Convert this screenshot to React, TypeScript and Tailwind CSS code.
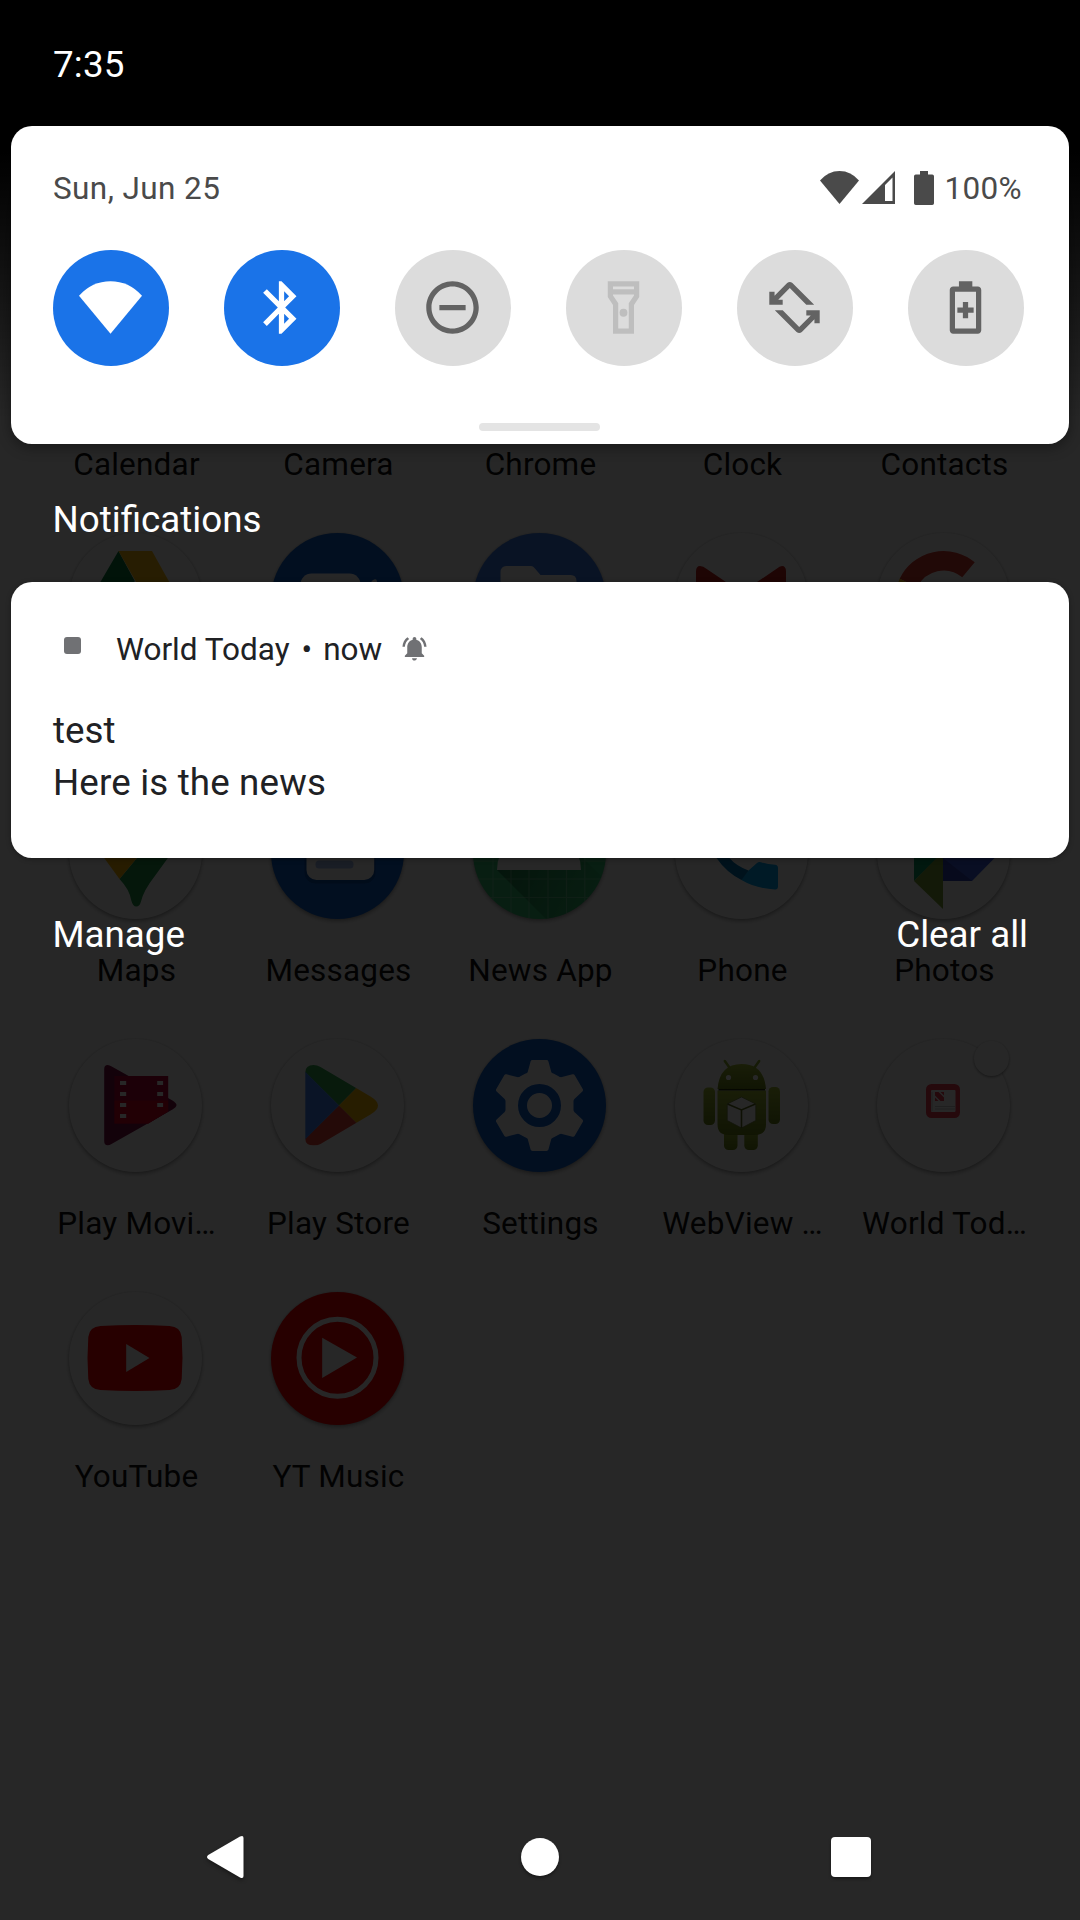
import type { ReactNode } from 'react';

/* Launcher icon art. Every icon uses a canvas centred on 0,0 with a radius of 66.5. */

function Disc({ color = 'bg-white', badge = false, children }: { color?: string; badge?: boolean; children?: ReactNode }) {
  return (
    <div className={`relative h-[133px] w-[133px] rounded-full shadow-[0_2px_4px_rgba(0,0,0,0.35),0_0_2px_rgba(0,0,0,0.12)] ${color}`}>
      <svg viewBox="-66.5 -66.5 133 133" className="h-full w-full overflow-hidden rounded-full">
        {children}
      </svg>
      {badge && <span className="absolute top-[2px] right-[1px] h-[35px] w-[35px] rounded-full bg-white shadow-[0_1px_3px_rgba(0,0,0,0.45)]" />}
    </div>
  );
}

const Drive = () => (
  <Disc>
    <path fill="#0b7a3c" d="M-17-48.500-50 8h32L-.7-18.500z" />
    <path fill="#fbbc04" opacity=".95" d="M-17-48.500h33.500L48 8H15z" />
  </Disc>
);

const Duo = () => (
  <Disc color="bg-[#0f62d2]">
    <rect x="-37" y="-26" width="60" height="52" rx="11" fill="#fff" />
    <path fill="#fff" d="M23-6 35-19q4-3 4.500 1v36q0 4-4 1L23 6z" />
  </Disc>
);

const Files = () => (
  <Disc color="bg-[#3f7de8]">
    <path fill="#fff" d="M-39 24v-51q0-6.500 6-6.500h24.500q2 0 3.500 2l6 7H31q6 0 6 6v42.500z" />
  </Disc>
);

const Gmail = () => (
  <Disc>
    <path fill="#c5221f" d="M-45.500 20v-48q0-5.500 4-5.500 3.500 0 6 2.500L0-7l35.500-24q2.500-2.500 5-2.500 4 0 4 5.500v48H30v-25L0 15l-30-20v25z" />
    <path fill="#8f1514" d="M-45.500 20v-38l15 10v28zM44.500 20v-38l-15 10v28z" />
  </Disc>
);

const Google = () => (
  <Disc>
    <g fill="none" strokeWidth="19.500">
      <path stroke="#d93a30" d="M-35-16.500A38.800 38.800 0 0 1 25-29.700" />
      <path stroke="#fbbc04" d="M-35 17a38.800 38.800 0 0 1 0-33.500" />
    </g>
  </Disc>
);

const Maps = () => (
  <Disc>
    <path fill="#23954a" d="M1.400 5.500V-8H38q-1 8-5.600 13.500L19 24Q8 38 5.500 49q-1.300 5-4.700 5-3.500 0-5-6Q-6 37-16 26.500z" />
    <path fill="#fbb604" d="M-31.300 5.500-38-8H12L1.400 5.500-16 26.500z" />
  </Disc>
);

const Messages = () => (
  <Disc color="bg-[#0f62d2]">
    <rect x="-33" y="-20" width="71" height="51" rx="11" fill="#0a4190" opacity=".6" />
    <rect x="-31" y="-24" width="67.700" height="51.500" rx="10" fill="#fff" />
    <rect x="-22" y="8" width="38" height="8" rx="3.500" fill="#a5bff0" />
  </Disc>
);

const NewsApp = () => (
  <Disc color="bg-[#35c474]">
    <defs>
      <linearGradient id="news-shade" x1="0" y1="0" x2="1" y2="0.300">
        <stop offset="0" stopColor="#1c7f49" />
        <stop offset="1" stopColor="#1c7f49" stopOpacity="0.100" />
      </linearGradient>
    </defs>
    <path fill="url(#news-shade)" d="M-42.500 17.500 8 68l60-20V30L38 0z" />
    <path
      stroke="#fff"
      strokeOpacity=".25"
      strokeWidth="1.200"
      d="M-46.500-66v132M-28.500-66v132M-10.500-66v132M8.500-66v132M27-66v132M45.300-66v132M-66 8.500H66M-66 26.500H66M-66 45H66"
    />
    <path fill="#fff" d="M-42.500 17.500a42 42 0 0 1 84 0z" />
  </Disc>
);

const Phone = () => (
  <Disc>
    <path fill="#0277b8" d="M-37-20Q-35-6-25 5.500-15 20 0 27.500q4-1 7-9.500Q-6 13-12 5.500L-20-20z" />
    <path fill="#03a9f4" d="M7 18 15.500 10.500q1.500-1.500 4-.8Q26 11.500 33.500 12.300q3 .2 3 3.200v18.500q0 3-3 2.900Q14 36 0 27.500z" />
  </Disc>
);

const Photos = () => (
  <Disc>
    <path fill="#0b9b66" d="M-29.500-30H0V0l-29.500 28.500z" />
    <path fill="#7ea336" d="M-.5-1v57.500l-29-28z" />
    <path fill="#3f5fe0" d="M-.5-1h58l-29 29.500H-.5z" />
    <path fill="#3340b4" d="M-.5 5.500 28.700 28.500H-.5z" />
  </Disc>
);

const PlayMovies = () => (
  <Disc>
    <path fill="#7d0f45" d="M-31.300-36.500q0-4 3.500-4 1.800 0 4 1.500L37-5q4 2.500 4 4.500T37 4L-24 38.500q-2 1.200-3.800 1.200-3.500 0-3.500-4z" />
    <path fill="#b80038" d="M-21-29.500h53.700V6L12.800 18H-21z" />
    <path fill="#dd0026" d="M-21-5h53.700V6L12.800 18H-21z" />
    <path fill="#fff" d="M-15.500-24.500h6.200v4h-6.200zM-15.500-13.500h6.200v4h-6.200zM-15.500-2.500h6.200v4h-6.200zM-15.500 8.500h6.200v4h-6.200zM21.700-24.500h5.900v4h-5.900zM21.700-13.500h5.900v4h-5.900zM21.700-2.500h5.900v4h-5.900z" />
  </Disc>
);

const PlayStore = () => (
  <Disc>
    <defs>
      <clipPath id="play-shape">
        <path d="M-32.200-33q0-7.500 8.200-7.500 3.500 0 7 2L33-9q7.500 4.500 7.500 9T33 9l-50 29.500q-3 1.500-7 1.500-8.200 0-8.200-7z" />
      </clipPath>
    </defs>
    <g clipPath="url(#play-shape)">
      <path fill="#34a853" d="M-40-41h60v22.200L1.500 0z" />
      <path fill="#fbbc04" d="M1.500 0 20-18.800 45-30v60L20 18.500z" />
      <path fill="#ea4335" d="M1.500 0 20 18.500V41h-60z" />
      <path fill="#4285f4" d="M-33-34.500 1.500 0-33 34.500z" />
    </g>
  </Disc>
);

const Settings = () => (
  <Disc color="bg-[#0f62d2]">
    <path
      fill="#fff"
      stroke="#fff"
      strokeWidth="4"
      strokeLinejoin="round"
      d="M-7-43.500H7L10-32.500q1 1.500 3 2.300l6 3.300q2 1 4 .4L33.500-29.200 41.500-15.500 33.500-8q-1.500 1.500-1.500 3.500v9q0 2 1.500 3.500l8 7.500-8 13.700L23 26.500q-2-.6-4 .4l-6 3.300q-2 .8-3 2.300L7 43.500H-7L-10 32.500q-1-1.500-3-2.300l-6-3.300q-2-1-4-.4L-33.500 29.200-41.500 15.500-33.500 8q1.500-1.500 1.500-3.500v-9q0-2-1.500-3.500l-8-7.500 8-13.700L-23-26.500q2 .6 4-.4l6-3.300q2-.8 3-2.300z"
    />
    <circle r="17" fill="#fff" stroke="#0f62d2" strokeWidth="9" />
  </Disc>
);

const WebView = () => (
  <Disc>
    <defs>
      <linearGradient id="droid" x1="0" y1="0" x2="0" y2="1">
        <stop offset="0" stopColor="#a4bf35" />
        <stop offset="1" stopColor="#6b8518" />
      </linearGradient>
    </defs>
    <g fill="url(#droid)">
      <rect x="-38" y="-18" width="11.500" height="37.500" rx="4.500" />
      <rect x="27" y="-18.500" width="11.500" height="37" rx="4.500" />
      <rect x="-17.500" y="20" width="13.500" height="24.500" rx="4.500" />
      <rect x="2.800" y="20" width="13.500" height="24.500" rx="4.500" />
      <path d="M-24-15h48.500v34q0 10.500-11 10.500h-26.500q-11 0-11-10.500z" />
      <path d="M-24-16.500q2-25 24.200-25t24.300 25z" />
    </g>
    <path stroke="#8fae30" strokeWidth="2.500" strokeLinecap="round" d="M-16.700-44.500l5 7M17.700-44.500l-5 7" />
    <path stroke="#26300a" strokeWidth="1.500" d="M-23-15.700h46.500" />
    <circle cx="-13" cy="-28" r="2.600" fill="#fff" />
    <circle cx="14" cy="-28" r="2.600" fill="#fff" />
    <path fill="#fff" stroke="#6f7f3a" strokeWidth=".8" d="M0-8.500 14.300-1.500V15L0 22.500-14.300 15V-1.500z" />
    <path fill="none" stroke="#5a6c1c" strokeWidth="1.600" d="M-14-1.500 0 4.500l14-6M0 4.500v18" />
  </Disc>
);

const WorldToday = () => (
  <Disc badge>
    <rect x="-17.500" y="-21.500" width="34" height="34" rx="5.500" fill="#ee3a50" />
    <rect x="-12.500" y="-15.500" width="24.500" height="22" rx="1" fill="#fff" />
    <path stroke="#ccc" strokeWidth="1" d="M-11.500-13.500v19M-8.500 1h20M-8.500 3.500h20" />
    <path fill="#ee3a50" d="M-8.500-13.500h3.500L.5-8v3.500h-3.500L-8.500-10zM-3-13.500H.5v3.500zM-8.500-8v3.500H-5z" />
  </Disc>
);

const YouTube = () => (
  <Disc>
    <path fill="#f00" d="M-35-32.500Q0-34.500 34-32.500q11 .5 12.200 11 1.600 21 0 42-1.200 10.500-12.200 11-34 2-69 0-11-.5-12.200-11-1.600-21 0-42 1.200-10.500 12.200-11z" />
    <path fill="#fff" d="M-9.300-14.500 14-.5-9.300 13.500z" />
  </Disc>
);

const YTMusic = () => (
  <Disc color="bg-[#f00]">
    <circle cy="-.7" r="38.500" fill="none" stroke="#fff" strokeWidth="5" />
    <path fill="#fff" d="M-15.300-20.800 19.500-1l-34.800 20.500z" />
  </Disc>
);

const apps: { label: string; icon: ReactNode }[] = [
  { label: 'Calendar', icon: <Disc /> },
  { label: 'Camera', icon: <Disc /> },
  { label: 'Chrome', icon: <Disc /> },
  { label: 'Clock', icon: <Disc /> },
  { label: 'Contacts', icon: <Disc /> },
  { label: '', icon: <Drive /> },
  { label: '', icon: <Duo /> },
  { label: '', icon: <Files /> },
  { label: '', icon: <Gmail /> },
  { label: '', icon: <Google /> },
  { label: 'Maps', icon: <Maps /> },
  { label: 'Messages', icon: <Messages /> },
  { label: 'News App', icon: <NewsApp /> },
  { label: 'Phone', icon: <Phone /> },
  { label: 'Photos', icon: <Photos /> },
  { label: 'Play Movi…', icon: <PlayMovies /> },
  { label: 'Play Store', icon: <PlayStore /> },
  { label: 'Settings', icon: <Settings /> },
  { label: 'WebView …', icon: <WebView /> },
  { label: 'World Tod…', icon: <WorldToday /> },
  { label: 'YouTube', icon: <YouTube /> },
  { label: 'YT Music', icon: <YTMusic /> },
];

function AppDrawer() {
  return (
    <div className="grid h-full grid-cols-[repeat(5,202px)] auto-rows-[253px] content-start bg-white pt-[280px] pl-[34.5px]">
      {apps.map(({ label, icon }, i) => (
        <div key={i} className="flex flex-col items-center">
          {icon}
          <div className="mt-[33px] h-[38px] pl-0.5 text-[31.5px] leading-[38px] tracking-[0.2px] whitespace-nowrap text-[#101010]">{label}</div>
        </div>
      ))}
    </div>
  );
}

/* Quick settings glyphs */

function Glyph({ children }: { children: ReactNode }) {
  return (
    <svg viewBox="0 0 24 24" fill="currentColor" className="mr-px mb-px h-[63px] w-[63px]">
      {children}
    </svg>
  );
}

const tiles: { tone: string; glyph: ReactNode }[] = [
  { tone: 'bg-[#1a73e8] text-white', glyph: <path d="M12 22 0 7.500Q5 2 12 2t12 5.500z" /> },
  {
    tone: 'bg-[#1a73e8] text-white',
    glyph: <path d="M17.710 7.710 12 2h-1v7.590L6.410 5 5 6.410 10.590 12 5 17.590 6.410 19 11 14.410V22h1l5.710-5.710-4.300-4.290 4.300-4.290zM13 5.830l1.880 1.880L13 9.590V5.830zm1.880 10.460L13 18.170v-3.760l1.880 1.880z" />,
  },
  {
    tone: 'bg-[#dcdcdc] text-[#636363]',
    glyph: <path d="M7 11h10v2H7zM12 2C6.480 2 2 6.480 2 12s4.480 10 10 10 10-4.480 10-10S17.520 2 12 2zm0 18c-4.410 0-8-3.590-8-8s3.590-8 8-8 8 3.590 8 8-3.590 8-8 8z" />,
  },
  {
    tone: 'bg-[#dcdcdc] text-[#bebebe]',
    glyph: (
      <>
        <path fillRule="evenodd" d="M18 2H6v6l2 3v11h8V11l2-3V2zm-2 2v1H8V4h8zm-2 6.400V20h-4v-9.600l-2-3V7h8v.4z" />
        <circle cx="12" cy="14" r="1.500" />
      </>
    ),
  },
  {
    tone: 'bg-[#dcdcdc] text-[#636363]',
    glyph: (
      <>
        <path d="M19.500 10.950 11.200 2.700q-1-.8-2 0L4.400 7.500V6h-2v4.950h5.100V9H5.800l4.400-4.400 6.300 6.350z" />
        <path d="M4.500 13.050l8.300 8.250q1 .8 2 0l4.800-4.800V18h2v-4.950h-5.100V15h1.700l-4.400 4.400-6.300-6.350z" />
      </>
    ),
  },
  {
    tone: 'bg-[#dcdcdc] text-[#636363]',
    glyph: (
      <>
        <path fillRule="evenodd" d="M16.700 4h-2.100V2H9.500v2H7.300C6.600 4 6 4.600 6 5.300v15.400c0 .7.6 1.300 1.300 1.300h9.400c.7 0 1.300-.6 1.300-1.300V5.300c0-.7-.6-1.300-1.300-1.300zM16 20H8V6h8z" />
        <path d="M13 9.900h-2V12H8.900v2H11v2.100h2V14h2.100v-2H13z" />
      </>
    ),
  },
];

function StatusIcons() {
  return (
    <div className="mr-0.5 flex items-center text-[#4a4a4a]">
      <svg viewBox="0 0 39 33" fill="currentColor" className="mb-[3px] h-[33px] w-[39px]">
        <path d="M19.500 33 0 9.500Q8 0 19.500 0T39 9.500z" />
      </svg>
      <svg viewBox="0 0 33 33" fill="currentColor" className="mb-[3px] ml-[3px] h-[33px] w-[33px]">
        <path fillRule="evenodd" d="M33 0v33H0zM23 14v16h7.500V6.500z" />
      </svg>
      <svg viewBox="0 0 20 34" fill="currentColor" className="mb-[3px] ml-[19px] h-[34px] w-[20px]">
        <path d="M6 0h8v3.500h4.200q1.800 0 1.800 1.800v26.900q0 1.800-1.800 1.800H1.800Q0 34 0 32.200V5.300q0-1.800 1.800-1.800H6z" />
      </svg>
      <span className="ml-[11px] text-[31.5px] leading-[38px] tracking-[0.3px]">100%</span>
    </div>
  );
}

function QuickSettings() {
  return (
    <section className="mx-[11px] flex h-[318px] shrink-0 flex-col rounded-[21px] bg-white pt-11 pr-[45px] pl-[42px] shadow-[0_3px_14px_rgba(0,0,0,0.4)]">
      <div className="flex h-[38px] items-center justify-between text-[#4a4a4a]">
        <span className="text-[31.5px] leading-[38px] tracking-[0.4px]">Sun, Jun 25</span>
        <StatusIcons />
      </div>
      <div className="mt-[42px] flex justify-between">
        {tiles.map(({ tone, glyph }, i) => (
          <div key={i} className={`flex h-[116px] w-[116px] items-center justify-center rounded-full ${tone}`}>
            <Glyph>{glyph}</Glyph>
          </div>
        ))}
      </div>
      <div className="mt-[57px] ml-[426px] h-2 w-[121px] rounded-full bg-[#e4e4e4]" />
    </section>
  );
}

function NotificationCard() {
  return (
    <section className="mx-[11px] mt-10 h-[276px] shrink-0 rounded-[21px] bg-white px-[42px] pt-[49px] text-[#202124] shadow-[0_1px_5px_rgba(0,0,0,0.35)]">
      <div className="flex h-[38px] items-center text-[31.5px] leading-[38px]">
        <span className="mb-[9px] ml-[11px] h-[17px] w-[17px] rounded-[3px] bg-[#707174]" />
        <span className="ml-[35px]">World Today</span>
        <span className="ml-3">•</span>
        <span className="ml-[11px]">now</span>
        <svg viewBox="0 0 24 24" fill="#707174" className="mb-[3px] ml-[18px] h-[29px] w-[29px]">
          <path d="M7.580 4.080 6.150 2.650C3.750 4.480 2.170 7.300 2.030 10.500h2c.15-2.650 1.510-4.970 3.550-6.420zm12.390 6.420h2c-.15-3.200-1.730-6.020-4.120-7.850l-1.420 1.430c2.020 1.450 3.390 3.770 3.540 6.420zM18 11c0-3.070-1.640-5.640-4.500-6.320V4c0-.83-.67-1.500-1.500-1.500s-1.500.67-1.500 1.500v.68C7.630 5.360 6 7.920 6 11v5l-2 2v1h16v-1l-2-2v-5zm-6 11c.14 0 .27-.01.4-.04.65-.14 1.180-.58 1.440-1.180.1-.24.15-.5.15-.78h-4c.01 1.100.9 2 2.010 2z" />
        </svg>
      </div>
      <div className="mt-10 text-[36.75px] leading-[44px]">test</div>
      <div className="mt-2 text-[36.75px] leading-[44px] tracking-[0.15px]">Here is the news</div>
    </section>
  );
}

function NavigationBar() {
  return (
    <nav className="mt-auto mb-[41px] flex h-11 shrink-0 items-center pl-[206px]">
      <svg viewBox="0 0 38 44" fill="#fff" className="h-11 w-[38px] drop-shadow-[0_2px_2px_rgba(0,0,0,0.4)]">
        <path d="M2.200 20 34 1.500q3.500-1.700 3.500 1.500v38q0 3.200-3.500 1.500L2.200 24q-2.400-2 0-4z" />
      </svg>
      <span className="ml-[277px] h-[38px] w-[38px] rounded-full bg-white shadow-[0_2px_3px_rgba(0,0,0,0.4)]" />
      <span className="ml-[272px] h-10 w-10 rounded-[4px] bg-white shadow-[0_2px_3px_rgba(0,0,0,0.4)]" />
    </nav>
  );
}

export default function App() {
  return (
    <main className="relative h-[1920px] w-[1080px] overflow-hidden font-['Roboto',sans-serif]">
      <AppDrawer />
      <div className="absolute inset-0 bg-black/[0.847]" />
      <div className="absolute inset-0 flex flex-col bg-[linear-gradient(to_bottom,#000_145px,transparent_420px)]">
        <header className="h-[126px] shrink-0 pt-[43px] pl-[53px] text-[36.75px] leading-[44px] tracking-[0.2px] text-white">7:35</header>
        <QuickSettings />
        <h1 className="mt-[54px] shrink-0 pl-[52.5px] text-[36.75px] leading-[44px] text-white">Notifications</h1>
        <NotificationCard />
        <div className="mt-[55px] flex shrink-0 justify-between pr-[52px] pl-[52.5px] text-[36.75px] leading-[44px] text-white">
          <span>Manage</span>
          <span>Clear all</span>
        </div>
        <NavigationBar />
      </div>
    </main>
  );
}
